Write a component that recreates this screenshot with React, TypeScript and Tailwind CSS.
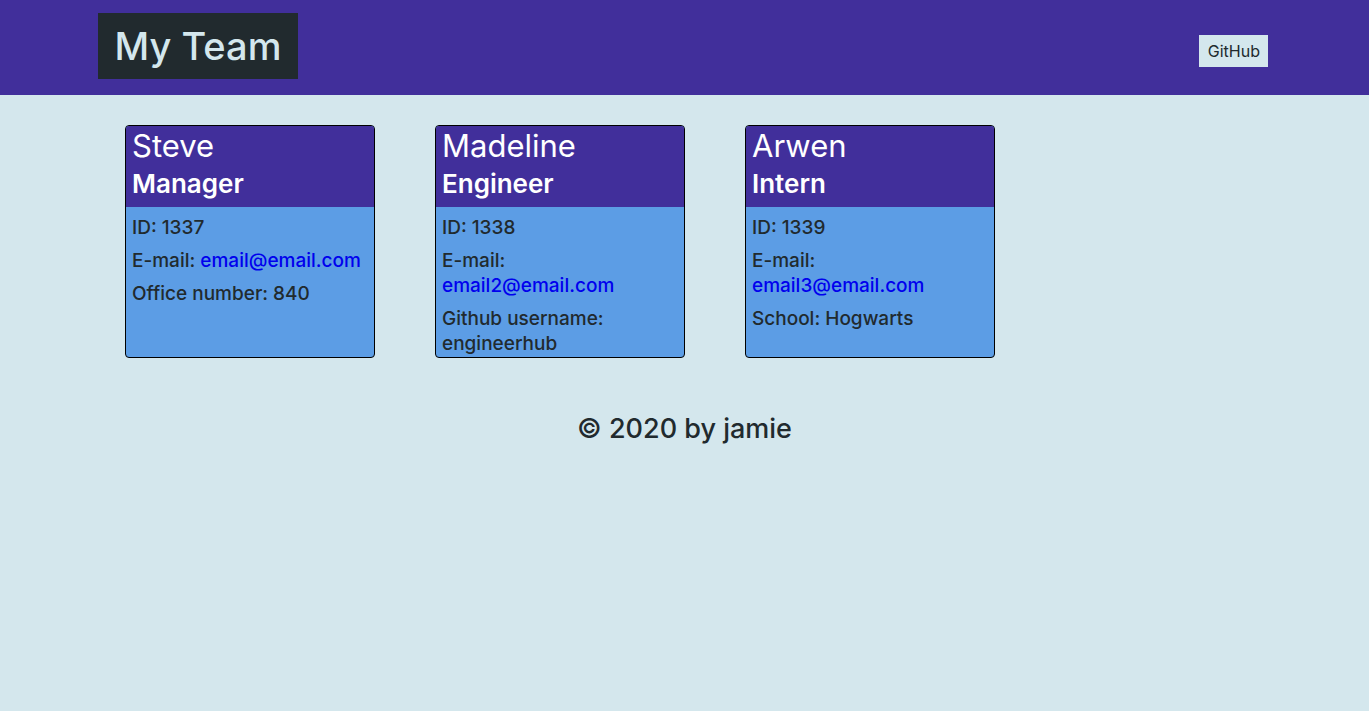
import React from 'react';

const team = [
  { name: "Steve", role: "Manager", id: 1337, email: "email@email.com", extra: "Office number: 840" },
  { name: "Madeline", role: "Engineer", id: 1338, email: "email2@email.com", extra: "Github username: engineerhub" },
  { name: "Arwen", role: "Intern", id: 1339, email: "email3@email.com", extra: "School: Hogwarts" },
];

export default function App() {
  return (
    <div className="min-h-screen bg-[#d4e7ed] text-[#212a2e] font-['Inter',sans-serif]">
      {/* Header */}
      <header className="bg-[#412f9b] h-[95px]">
        <div className="mx-auto w-[1173px] h-full flex items-center justify-between pr-[3px]">
          <h1 className="bg-[#212a2e] text-[#d4e7ed] text-[38px] font-medium leading-none h-[66px] w-[200px] flex items-center justify-center -mt-[3px]">
            My Team
          </h1>
          <a href="#" className="bg-[#d4e7ed] text-[#212a2e] text-[16px] h-[32px] px-[8px] pl-[9px] mt-[6px] flex items-center">GitHub</a>
        </div>
      </header>

      {/* Cards */}
      <main className="mx-auto w-[1173px] pt-[30px] pl-[27px] flex gap-[60px]">
        {team.map((m) => (
          <div key={m.id} className="w-[250px] h-[233px] border border-black rounded-[4px] overflow-hidden bg-[#5c9de5] flex flex-col">
            <div className="bg-[#412f9b] text-white px-[6px] h-[81px] pt-[1px]">
              <div className="text-[31px] leading-[38px]">{m.name}</div>
              <div className="text-[26px] font-semibold leading-[37px]">{m.role}</div>
            </div>
            <div className="px-[6px] pt-[8px] text-[19px] font-medium leading-[25px] flex flex-col gap-[8px]">
              <p>ID: {m.id}</p>
              <p>E-mail: <a href="#" className="text-[#0000ee]">{m.email}</a></p>
              <p>{m.extra}</p>
            </div>
          </div>
        ))}
      </main>

      <footer className="text-center text-[27px] font-medium pt-[51px]">© 2020 by jamie</footer>
    </div>
  );
}
